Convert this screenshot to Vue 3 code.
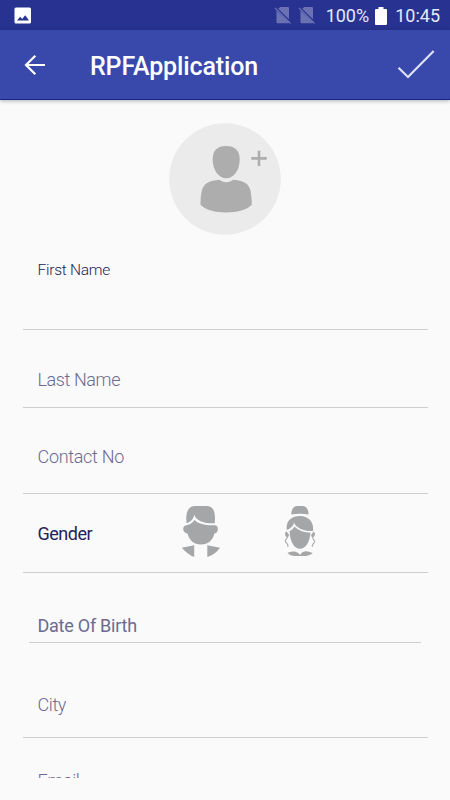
<template>
  <div class="screen">
    <div class="status-bar">
      <svg class="picture" width="18" height="18" viewBox="0 0 18 18">
        <path fill="#fff" fill-rule="evenodd" d="M2 .5h13.500a1.500 1.500 0 0 1 1.500 1.500v13a1.500 1.500 0 0 1-1.500 1.500H2A1.500 1.500 0 0 1 .500 15V2A1.500 1.500 0 0 1 2 .5zM3 13.500h12l-3.800-5.200-3 3.700-2-2.300z" />
      </svg>
      <div class="status-right">
        <svg v-for="n in 2" :key="n" class="no-sim" width="18" height="19" viewBox="0 0 18 19">
          <path fill="#6a72b4" d="M6.300 1H14a1 1 0 0 1 1 1v11.200L4.200 2.800zM2.500 4.700 15 16.500a1 1 0 0 1-1 .800H3.500a1 1 0 0 1-1-1z" />
          <path stroke="#6a72b4" stroke-width="1.300" d="M1 2l15.500 15.500" />
        </svg>
        <span class="percent">100%</span>
        <svg class="battery" width="12" height="18" viewBox="0 0 12 18">
          <path fill="#fff" d="M3.500 0h5v2H11a1 1 0 0 1 1 1v14a1 1 0 0 1-1 1H1a1 1 0 0 1-1-1V3a1 1 0 0 1 1-1h2.500z" />
        </svg>
        <span class="clock">10:45</span>
      </div>
    </div>

    <header class="app-bar">
      <svg class="back" width="22" height="22" viewBox="0 0 22 22">
        <path fill="none" stroke="#fff" stroke-width="2.200" d="M21 11H2.500M11.300 1.700 2 11l9.300 9.300" />
      </svg>
      <h1>RPFApplication</h1>
      <svg class="done" width="38" height="30" viewBox="0 0 38 30">
        <path fill="none" stroke="#dde0f5" stroke-width="2.200" d="M1.500 17.700l9.500 9.300L36.700 1" />
      </svg>
    </header>

    <main class="form">
      <div class="photo">
        <svg width="112" height="112" viewBox="0 0 112 112">
          <circle cx="56" cy="56" r="55.800" fill="#ebebeb" />
          <path fill="#adadad" d="M57 23c9 0 13.700 4.500 13.700 13.500C70.700 47 65 55.300 57.200 55.300S43.700 47 43.700 36.500C43.700 27.500 48 23 57 23z" />
          <path fill="#adadad" d="M50.300 56.800c4 3.300 10 3.300 14 0 11.500 1 16 4.500 17.300 11.500.7 4 1.200 9 1.200 13.500-5 5.300-15 7.700-25.800 7.700s-20.500-2.400-25.500-7.700c0-5 .3-9.500 1.200-13.500 1.600-7 6-10.500 17.600-11.500z" />
          <path stroke="#adadad" stroke-width="2.600" d="M82.300 35.400h15.400M90 27.700v15.400" />
        </svg>
      </div>

      <div class="field first"><span class="label">First Name</span></div>
      <div class="field last"><span class="label">Last Name</span></div>
      <div class="field contact"><span class="label">Contact No</span></div>
      <div class="field gender">
        <span class="label">Gender</span>
        <svg class="male" width="40" height="52" viewBox="0 0 40 52">
          <g fill="#a5a6a7">
            <path d="M5.500 18.200C4.500 8 6.500 1 14.500 1h10.800c7.500 0 9.500 6 8.400 17.200-8 .6-15.500-1-19.600-6.500-.5-.7-.8-1.300-.8-2.100-1 5-3.800 7.600-7.800 8.600z" />
            <path d="M4.500 20.500c4.300-.5 7.300-2.800 8.800-5.500 4.700 4.300 12 5.700 21 5.200 3.700.3 3.500 8-.9 8.300C31.800 35 27.500 39.500 20 39.500S8.200 35 6.500 28.500C1.200 28 1.200 21 4.500 20.500z" />
            <path d="M.800 42.800l12.400-2.500V52C8.500 50.200 4.500 47.300.800 42.800zM39 42.800l-12.700-2.500V52c5.500-1.500 9.200-4.700 12.700-9.200z" />
          </g>
        </svg>
        <svg class="female" width="34" height="52" viewBox="0 0 34 52">
          <g fill="#a5a6a7">
            <path d="M7.300 9.600C7.300 3.500 10 1 13.200 1h5.300c3.500 0 6.100 3 6.100 8.600-5.500-1.300-11.800-1.300-17.300 0z" />
            <path d="M2.800 25C1.500 16.500 7 11 15.900 11S30.300 17.500 29 26c-7 .3-13.800-1.300-18-6.500-.5-.6-.8-1.300-.8-2-1.200 4-4 6.300-7.400 7.500z" />
            <path d="M5.500 26.200c2.200-1 3.900-2.700 4.900-4.700 4.400 4.400 10 6 16 6C26 37 21.500 43.800 16 43.800S6 37 5.500 26.200zM2.700 26.300c-2 .8-2.500 4.500.6 6.200l1.600-2zM29.200 26.500c2.200.8 2.600 4.300-.3 6l-1.500-2z" />
            <path d="M3.500 48c4-1.800 8-2.200 11 .2.500.5 1 1 1.500 1.800 2.300-3.700 6-4.300 9-3.200 1.500.6 2.800 1 3.700 1.300C27 49.700 24.200 51 21 51H11c-3.200 0-5.500-1-7.500-3z" />
          </g>
          <path fill="none" stroke="#a5a6a7" stroke-width="1.100" d="M4 29c1.500 4-3 4-2.500 7.300.4 2.500 3.300 2.300 2.300 5.500M28 29c-1.300 4 3 5 2.400 8-.5 2.300-2.800 2-2 4.800" />
        </svg>
      </div>
      <div class="field dob"><span class="label">Date Of Birth</span></div>
      <div class="field city"><span class="label">City</span></div>
      <div class="field email"><span class="label">Email</span></div>
    </main>
  </div>
</template>

<script setup>
</script>

<style>
body { background: #fafafa; }
</style>

<style scoped>
.screen { height: 800px; overflow: hidden; background: #fafafa; font-family: Roboto, sans-serif; }

.status-bar { display: flex; align-items: center; justify-content: space-between; height: 30px; padding: 1px 10px 0 14px; box-sizing: border-box; background: #283391; color: #e6e8f7; font-size: 18px; }
.status-right { display: flex; align-items: center; }
.no-sim { margin-right: 6px; }
.percent { margin-left: 4px; margin-right: 5px; }
.battery { margin-right: -1px; margin-left: 1px; }
.clock { margin-left: 9px; }

.app-bar { display: flex; align-items: center; height: 70px; padding: 0 15px 0 24px; box-sizing: border-box; background: #3949ab; border-bottom: 1px solid #14288a; box-shadow: 0 1px 4px rgba(0, 0, 0, 0.3); }
h1 { flex: 1; margin: 4px 0 0 44px; color: #fff; font-size: 25px; font-weight: 500; line-height: 30px; letter-spacing: -0.12px; }

.form { height: 678px; overflow: hidden; padding: 0 22px 0 23px; box-sizing: border-box; }
.photo { display: flex; justify-content: center; height: 135px; padding: 23px 2px 0 0; box-sizing: border-box; }
.field { display: flex; align-items: flex-start; padding-left: 14.500px; box-sizing: border-box; border-bottom: 1px solid #cdcecf; }
.label { color: #6c6a91; font-size: 18px; font-weight: 300; line-height: 20px; letter-spacing: -0.4px; }

.first { height: 95px; padding-top: 25px; }
.first .label { color: #1c1a55; font-size: 15.500px; letter-spacing: -0.250px; }
.last { height: 78px; padding-top: 40px; }
.contact { height: 86px; padding-top: 39px; }
.contact .label { letter-spacing: -0.3px; }
.gender { height: 79px; padding-top: 11px; }
.gender .label { width: 143.500px; margin-top: 19px; color: #24225c; font-weight: 400; letter-spacing: -0.5px; }
.female { margin-left: 63px; }
.dob { height: 70px; margin: 0 7px 0 6px; padding-top: 43px; padding-left: 8.500px; }
.dob .label { font-weight: 400; letter-spacing: -0.25px; }
.city { height: 95px; padding-top: 52px; }
.email { padding-top: 33px; }
</style>
